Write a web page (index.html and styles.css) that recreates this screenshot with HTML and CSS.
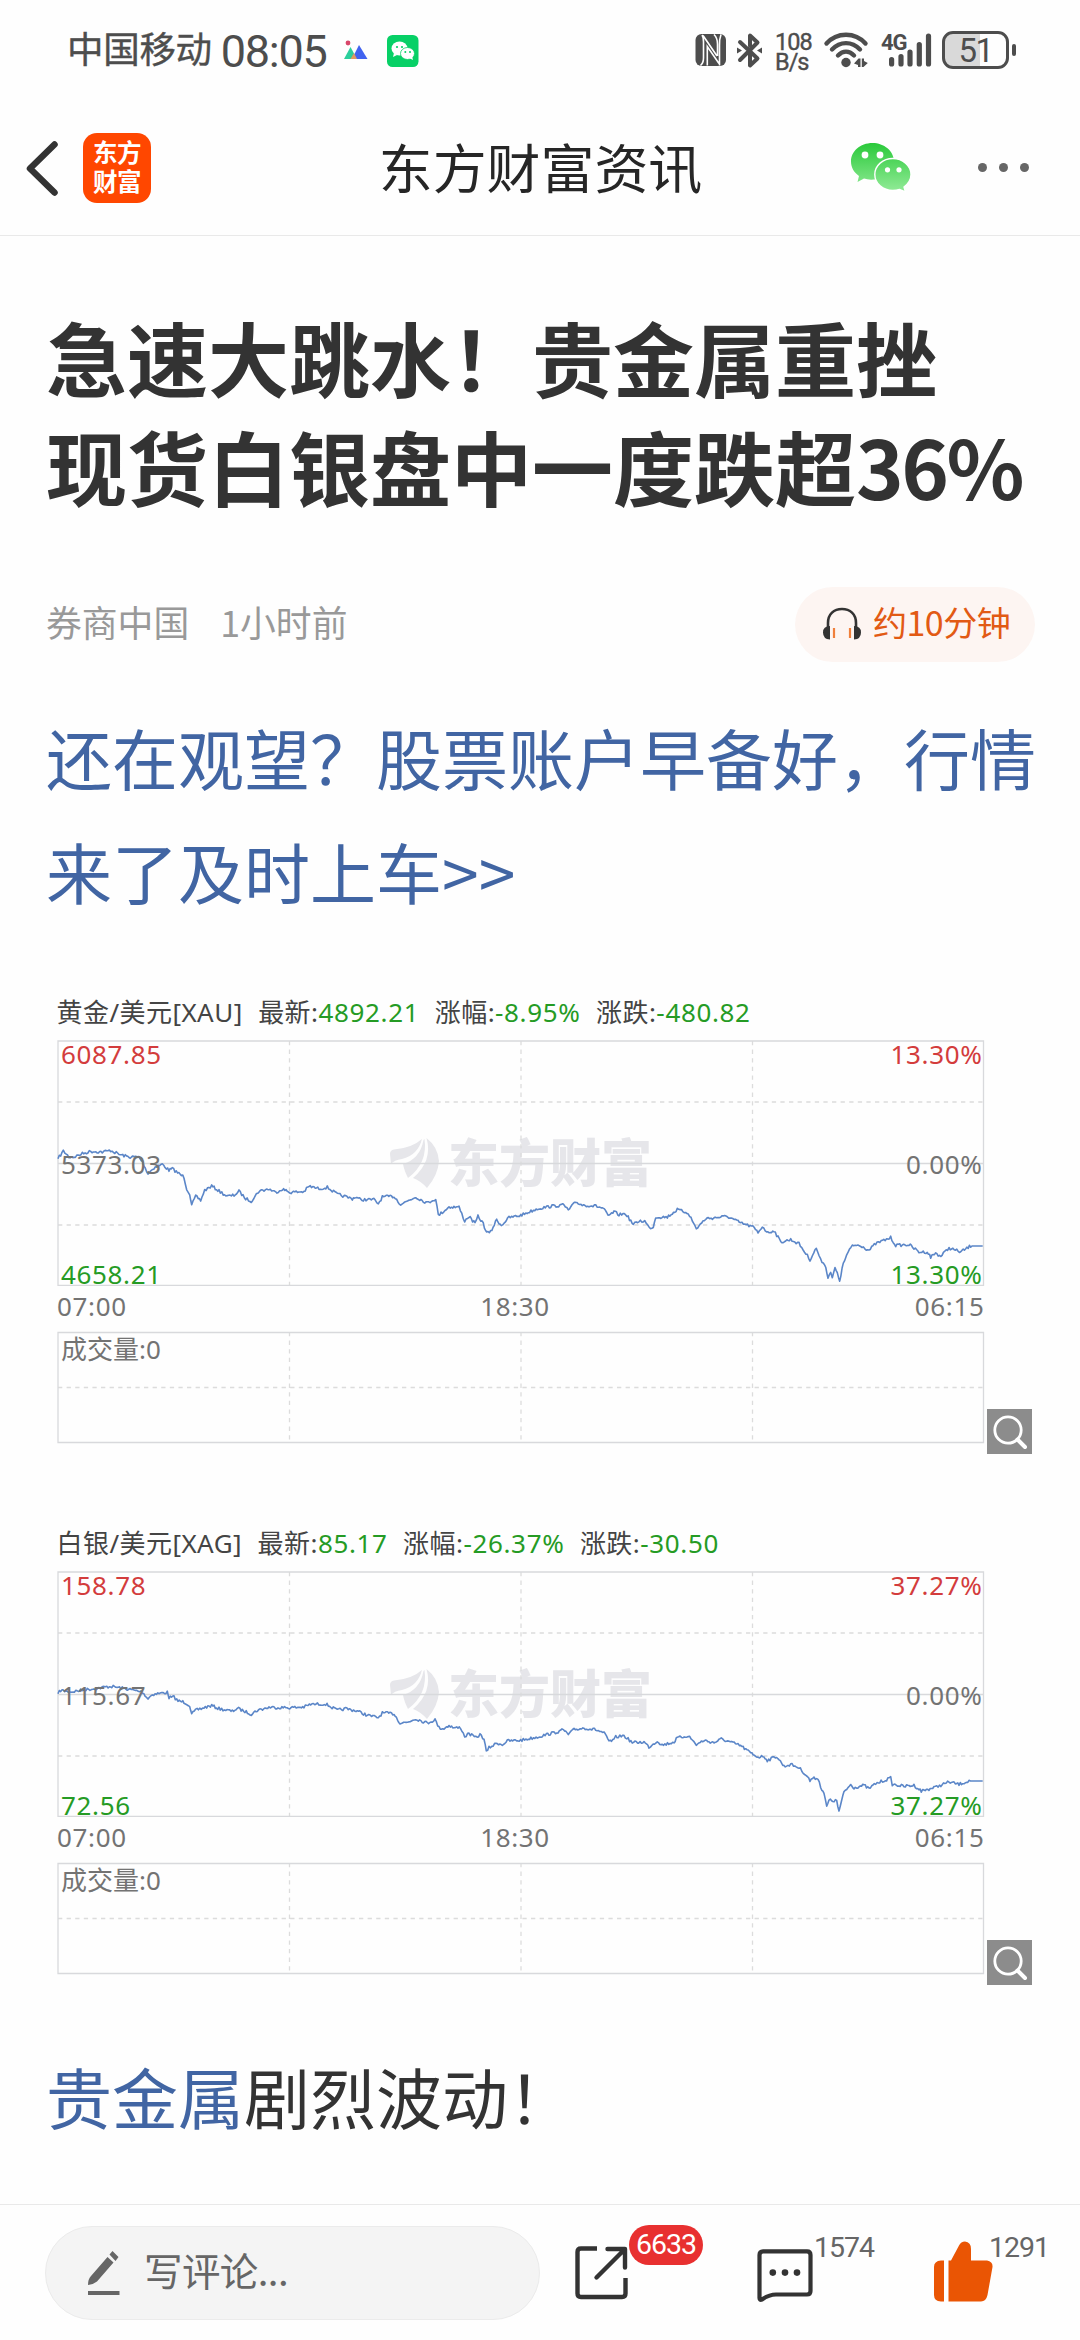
FILE: index.html
```html
<!DOCTYPE html>
<html lang="zh-CN">
<head>
<meta charset="utf-8">
<title>东方财富资讯</title>
<link rel="stylesheet" href="styles.css">
</head>
<body>
<div class="status">
  <span class="carrier">中国移动</span>
  <span class="clock">08:05</span>
  <svg class="ic-mountain" width="24" height="20" viewBox="0 0 24 20">
    <circle cx="4" cy="3" r="2.4" fill="#d8476a"/>
    <path d="M0 19L6.500 7L13 19z" fill="#2ccf9c"/>
    <path d="M8 19L15 5L23.500 19z" fill="#4163f0"/>
    <path d="M6.500 19L10 13L13 19z" fill="#e09a62"/>
  </svg>
  <svg class="ic-chat" width="32" height="32" viewBox="0 0 32 32">
    <rect width="31.500" height="32" rx="5.500" fill="#07d066"/>
    <ellipse cx="12.500" cy="13.500" rx="8" ry="7" fill="#fff"/><path d="M7 18l-1 4l4-2z" fill="#fff"/>
    <ellipse cx="20.500" cy="18.500" rx="7" ry="6" fill="#fff" stroke="#07d066" stroke-width=".8"/><path d="M22 23l4 2l-1-4z" fill="#fff"/>
    <g fill="#07d066"><circle cx="10" cy="12" r="1.100"/><circle cx="15" cy="12" r="1.100"/><circle cx="18.300" cy="17" r="1"/><circle cx="23" cy="17" r="1"/></g>
  </svg>
  <div class="status-right">
    <svg class="ic-nfc" width="32" height="32" viewBox="0 0 32 32">
      <rect x=".5" width="30.500" height="32" rx="6" fill="#4d4d4d"/>
      <path d="M7 1Q8.500 3 8.500 8V24Q8.500 29 5.500 31.500M8 1.500L22 22M12.300 31.500V12.500L24 29.500M19 .5Q22.500 4 22.500 10V22M26 .5Q24 6 24.500 12V31.500" stroke="#fff" stroke-width="1.600" fill="none"/>
    </svg>
    <svg class="ic-bt" width="26" height="35" viewBox="0 0 26 35" fill="none" stroke="#4d4d4d" stroke-width="4" stroke-linejoin="round" stroke-linecap="round">
      <path d="M3 9L20.500 25.500L13 32.500V22M3 27L20.500 9.500L13 2.500V13"/>
      <path d="M0 14.500L5 17.500L0 20.500zM25 14.500L20 17.500L25 20.500z" fill="#4d4d4d" stroke="none"/>
    </svg>
    <div class="speed"><span>108</span><span>B/s</span></div>
    <svg class="ic-wifi" width="45" height="36" viewBox="0 0 45 36">
      <g fill="none" stroke="#4d4d4d" stroke-width="4.400" stroke-linecap="round">
        <path d="M2.500 11.500C13-.2 31-.2 41.500 11.500M8 17.500C16 9 28 9 36 17.500M14 23.500C19 18.500 25 18.500 30 23.500"/>
      </g>
      <circle cx="22" cy="30.500" r="4.700" fill="#4d4d4d"/>
      <path d="M30 31.500L34.500 26.500H36.500V35H34V33zM43.800 31L39.500 35H37.800V26.500H40V29z" fill="#4d4d4d"/>
    </svg>
    <div class="signal">
      <span class="net">4G</span>
      <svg width="52" height="36" viewBox="0 0 52 36" stroke="#4d4d4d" stroke-width="5.200" stroke-linecap="round">
        <path d="M10.600 27.500V32M20 24.500V32M29 20V32M38.300 12.500V32M47.500 4V32"/>
      </svg>
    </div>
    <div class="battery"><span class="battery-level">51</span></div>
    <i class="battery-nub"></i>
  </div>
</div>

<header class="nav">
  <div class="nav-left">
    <svg width="32" height="56" viewBox="0 0 32 56" fill="none" stroke="#333" stroke-width="6.500" stroke-linecap="round" stroke-linejoin="round"><path d="M28.500 4.500L4 28.500L28.500 52.500"/></svg>
    <div class="app-logo"><span>东方</span><span>财富</span></div>
  </div>
  <h1 class="nav-title">东方财富资讯</h1>
  <div class="nav-right">
    <svg width="62" height="50" viewBox="0 0 62 50">
      <defs><linearGradient id="wx" x1="0" y1="0" x2="0" y2="50" gradientUnits="userSpaceOnUse"><stop offset="0" stop-color="#2ac93a"/><stop offset="1" stop-color="#95ec9a"/></linearGradient></defs>
      <path d="M22.500 0C10 0 1 8.300 1 18.500C1 24.500 4 29.500 9 33L7.500 39L14 35.500Q18 37 24 36.500Q44 34 44 18.500C44 8 34 0 22.500 0z" fill="url(#wx)"/>
      <path d="M42.800 15.500C52.500 15.500 61 22.500 61 31.500C61 37 58 41 54 44L55.500 49L49.500 46.500Q46.500 47.500 42.800 47.500C33 47.500 24.800 40.500 24.800 31.500C24.800 22.500 33 15.500 42.800 15.500z" fill="url(#wx)" stroke="#fff" stroke-width="1.400"/>
      <g fill="#fff"><circle cx="15" cy="12" r="3.400"/><circle cx="30" cy="12" r="3.400"/><circle cx="37.500" cy="26.800" r="2.600"/><circle cx="49" cy="26.800" r="2.600"/></g>
    </svg>
    <div class="more"><i></i><i></i><i></i></div>
  </div>
</header>

<main class="article">
  <h2 class="headline">急速大跳水！贵金属重挫<br>现货白银盘中一度跌超<span class="num">36%</span></h2>
  <div class="meta">
    <span class="source">券商中国</span><span class="time">1小时前</span>
    <div class="listen">
      <svg width="40" height="34" viewBox="0 0 40 34">
        <path d="M6 21V16C6 7 12 2 20 2S34 7 34 16V21" fill="none" stroke="#333" stroke-width="2.600"/>
        <path d="M8 19Q1 19 1 25.500T8 32.500zM32 19Q39 19 39 25.500T32 32.500z" fill="#333"/>
        <path d="M12 21V31M28 21V31" stroke="#f0803c" stroke-width="2.200"/>
      </svg>
      <span class="listen-text">约10分钟</span>
    </div>
  </div>
  <p class="promo">还在观望？股票账户早备好，行情<br>来了及时上车&gt;&gt;</p>

  <figure class="quote">
    <figcaption class="quote-head">
      <span>黄金/美元[XAU]</span><span>最新:<b>4892.21</b></span><span>涨幅:<b>-8.95%</b></span><span>涨跌:<b>-480.82</b></span>
    </figcaption>
    <svg class="plot" width="930" height="404" viewBox="0 0 930 404" data-series="gold">
      <g class="mark" transform="translate(333,97)"><path d="M0 17Q0 13 4 12.500Q22 11 32 2Q28 18 12 22Q4 23 1 27zM33.500 3Q30 22 13 27Q14 33 18 41Q38 26 34.500 2zM36.500 1Q48 10 49 24Q48 38 37 51Q31 44 23 41Q43 24 36.500 1z"/><text x="58" y="45">东方财富</text></g>
      <path class="grid" d="M1 62H926M1 185H926M232.500 1V245M464 1V245M695.500 1V245M1 347.500H926M232.500 292V402M464 292V402M695.500 292V402"/>
      <path class="frame" d="M1 1H926.500V245.300H1zM1 123.500H926.500M1 292.500H926.500V402.500H1z"/>
      <path class="series"/>
      <g class="labels">
        <text class="up" x="4" y="24">6087.85</text><text x="4" y="133.500">5373.03</text><text class="down" x="4" y="243.500">4658.21</text>
        <text class="up end" x="925.500" y="24">13.30%</text><text class="end" x="925.500" y="133.500">0.00%</text><text class="down end" x="925.500" y="243.500">13.30%</text>
        <text x="0" y="276">07:00</text><text class="mid" x="458" y="276">18:30</text><text class="end" x="927.500" y="276">06:15</text>
        <text class="vol" x="4" y="319">成交量:0</text>
      </g>
    </svg>
    <span class="magnify"><svg width="45" height="45" viewBox="0 0 45 45" fill="none" stroke="#fff" stroke-width="2.800" stroke-linecap="round"><circle cx="21" cy="21" r="13.200"/><path d="M30.500 30.500L38 38" stroke-width="4"/></svg></span>
  </figure>

  <figure class="quote">
    <figcaption class="quote-head">
      <span>白银/美元[XAG]</span><span>最新:<b>85.17</b></span><span>涨幅:<b>-26.37%</b></span><span>涨跌:<b>-30.50</b></span>
    </figcaption>
    <svg class="plot" width="930" height="404" viewBox="0 0 930 404" data-series="silver">
      <g class="mark" transform="translate(333,97)"><path d="M0 17Q0 13 4 12.500Q22 11 32 2Q28 18 12 22Q4 23 1 27zM33.500 3Q30 22 13 27Q14 33 18 41Q38 26 34.500 2zM36.500 1Q48 10 49 24Q48 38 37 51Q31 44 23 41Q43 24 36.500 1z"/><text x="58" y="45">东方财富</text></g>
      <path class="grid" d="M1 62H926M1 185H926M232.500 1V245M464 1V245M695.500 1V245M1 347.500H926M232.500 292V402M464 292V402M695.500 292V402"/>
      <path class="frame" d="M1 1H926.500V245.300H1zM1 123.500H926.500M1 292.500H926.500V402.500H1z"/>
      <path class="series"/>
      <g class="labels">
        <text class="up" x="4" y="24">158.78</text><text x="4" y="133.500">115.67</text><text class="down" x="4" y="243.500">72.56</text>
        <text class="up end" x="925.500" y="24">37.27%</text><text class="end" x="925.500" y="133.500">0.00%</text><text class="down end" x="925.500" y="243.500">37.27%</text>
        <text x="0" y="276">07:00</text><text class="mid" x="458" y="276">18:30</text><text class="end" x="927.500" y="276">06:15</text>
        <text class="vol" x="4" y="319">成交量:0</text>
      </g>
    </svg>
    <span class="magnify"><svg width="45" height="45" viewBox="0 0 45 45" fill="none" stroke="#fff" stroke-width="2.800" stroke-linecap="round"><circle cx="21" cy="21" r="13.200"/><path d="M30.500 30.500L38 38" stroke-width="4"/></svg></span>
  </figure>

  <p class="body-text"><a>贵金属</a>剧烈波动！</p>
</main>

<footer class="toolbar">
  <div class="comment-box">
    <svg width="34" height="46" viewBox="0 0 34 46" fill="#666"><path d="M20.500 7L26.500 12.500L10 31.500Q5.500 35 1 35Q1 29 4 26zM22.500 4.500L25.500 1L31.500 7L28.500 11zM1 41H32.500V45H1z"/></svg>
    <span class="placeholder">写评论...</span>
  </div>
  <div class="action share">
    <svg width="54" height="54" viewBox="0 0 54 54" fill="none" stroke="#333" stroke-width="4.400"><path d="M22 2.500H6Q2.500 2.500 2.500 6V47.500Q2.500 51 6 51H47Q50.500 51 50.500 47.500V32"/><path d="M32.500 3H50V21.500M49 4L21.500 31.500" stroke-linecap="round" stroke-linejoin="round"/></svg>
    <span class="badge">6633</span>
  </div>
  <div class="action comments">
    <svg width="56" height="54" viewBox="0 0 56 54"><path d="M6 2.300H50Q53.500 2.300 53.500 6V42Q53.500 45.500 50 45.500H19Q12 45.500 5 50.500Q2.500 51.500 2.500 49V6Q2.500 2.300 6 2.300z" fill="none" stroke="#333" stroke-width="4.200"/><g fill="#333"><circle cx="15.800" cy="23.600" r="3.300"/><circle cx="28" cy="23.600" r="3.300"/><circle cx="40" cy="23.600" r="3.300"/></g></svg>
    <span class="count">1574</span>
  </div>
  <div class="action likes">
    <svg width="60" height="62" viewBox="0 0 60 62" fill="#ea5504"><path d="M10 19.500V60.500H7Q0 60 0 54V26Q0 20 7 19.500zM14.500 60.500V19.500H17L25 4.500Q27 .5 31 .5Q37 1 37 8V19.500H53Q59 20.500 58.500 26L53.500 54Q52 60.500 47 60.500z"/></svg>
    <span class="count">1291</span>
  </div>
</footer>
<script src="script.js"></script>
</body>
</html>
```
FILE: styles.css
```css
* { box-sizing: border-box; }
body {
  margin: 0;
  width: 1080px;
  height: 2340px;
  overflow: hidden;
  display: flex;
  flex-direction: column;
  background: #fefefe;
  color: #333;
  font-family: "Noto Sans CJK SC", "Noto Sans", sans-serif;
}
h1, h2, p, figure { margin: 0; }
svg { display: block; flex: none; overflow: visible; }

.status { height: 100px; display: flex; align-items: center; padding: 0 64px 0 67px; color: #4d4d4d; white-space: nowrap; }
.carrier { font-size: 36.500px; line-height: 50px; letter-spacing: -0.3px; margin-bottom: 4px; -webkit-text-stroke: .4px #4d4d4d; }
.clock { font-family: Roboto, sans-serif; font-size: 45px; line-height: 50px; letter-spacing: -1.300px; margin-left: 9px; margin-top: 3px; }
.ic-mountain { margin-left: 18px; }
.ic-chat { margin-left: 19px; margin-top: 2px; }
.status-right { margin-left: auto; display: flex; align-items: center; }
.ic-bt { margin-left: 10px; }
.speed { display: flex; flex-direction: column; width: 37px; margin-left: 12px; font: 23.500px/20px Roboto, sans-serif; letter-spacing: -1px; margin-top: 4px; }
.speed span { -webkit-text-stroke: .4px #4d4d4d; }
.ic-wifi { margin-left: 12px; }
.signal { display: grid; margin-left: 12px; }
.signal > * { grid-area: 1 / 1; }
.net { font: 700 22px/22px Roboto, sans-serif; letter-spacing: -1px; }
.battery { width: 67px; height: 38px; margin-left: 9px; border: 3px solid #4d4d4d; border-radius: 11px; background: linear-gradient(90deg, #d9d9d9 58%, #fefefe 58%); display: flex; justify-content: center; }
.battery-level { font: 33px/34px Roboto, sans-serif; letter-spacing: -1.500px; }
.battery-nub { width: 4px; height: 12px; border-radius: 2px; background: #4d4d4d; margin-left: 3px; }

.nav { height: 136px; display: grid; grid-template-columns: 1fr auto 1fr; align-items: center; border-bottom: 1px solid #e9e9e9; padding: 0 51px 0 26px; }
.nav-left { display: flex; align-items: center; gap: 25px; }
.app-logo { width: 68px; height: 70px; border-radius: 14px; background: #ff4700; color: #fff; display: flex; flex-direction: column; justify-content: center; align-items: center; font-weight: 700; font-size: 24.500px; line-height: 29.500px; letter-spacing: -0.5px; padding-bottom: 3px; }
.nav-title { font-size: 53.900px; font-weight: 400; color: #262626; line-height: 70px; margin: 0 -13px 3px 13px; }
.nav-right { display: flex; align-items: center; justify-content: flex-end; gap: 66px; }
.more { display: flex; gap: 12px; }
.more i { width: 9px; height: 9px; border-radius: 50%; background: #666; }

.article { flex: 1; padding: 66px 45px 0; display: flex; flex-direction: column; }
.headline { font-size: 81px; line-height: 108.500px; font-weight: 700; white-space: nowrap; padding-left: 1px; }
.headline .num { letter-spacing: -2.600px; }
.meta { display: flex; align-items: center; height: 74px; margin-top: 68px; font-size: 35.800px; color: #999; padding-left: 1px; }
.source, .time { margin-bottom: 6px; }
.time { margin-left: 31px; }
.listen { margin-left: auto; width: 240px; height: 75px; border-radius: 38px; background: #fdf5f2; display: flex; align-items: center; gap: 11px; padding-left: 27px; color: #e25a14; font-size: 34px; letter-spacing: -0.5px; white-space: nowrap; }
.listen-text { margin-bottom: 5px; }
.promo { margin-top: 39px; font-size: 66px; line-height: 113.500px; color: #4165a3; white-space: nowrap; padding-left: 1px; }

.quote { position: relative; height: 531px; padding-left: 11.500px; }
.promo + .quote { margin-top: 66px; }
.quote-head { height: 48px; display: flex; gap: 15.500px; padding-top: 1px; font: 26px/36px "Noto Sans", "Noto Sans CJK SC", sans-serif; letter-spacing: .450px; color: #444; white-space: nowrap; }
.quote-head b { font-weight: 400; color: #259b24; letter-spacing: .650px; }
.plot text { font-family: "Noto Sans", "Noto Sans CJK SC", sans-serif; font-size: 26px; letter-spacing: .650px; }
.plot .vol { letter-spacing: 0; }
.frame { fill: none; stroke: #d8d9dc; stroke-width: 1.300; }
.grid { fill: none; stroke: #dcdcdc; stroke-width: 1.300; stroke-dasharray: 4.300 4.300; }
.series { fill: none; stroke: #5b86c8; stroke-width: 1.600; stroke-linejoin: round; }
.labels { fill: #737373; }
.labels .up { fill: #d33c3c; }
.labels .down { fill: #259b24; }
.labels .end { text-anchor: end; }
.labels .mid { text-anchor: middle; }
.mark { fill: #e6e6ea; }
.plot .mark text { font-family: "Noto Sans CJK SC", sans-serif; font-weight: 900; font-size: 51px; letter-spacing: 0; }
.plot { margin-top: -1px; }
.magnify { position: absolute; left: 942px; top: 416px; width: 45px; height: 45px; background: #8c8c8c; }

.body-text { font-size: 66px; line-height: 113.500px; color: #333; margin-top: -16px; padding-left: 1px; }
.body-text a { color: #4165a3; }

.toolbar { height: 136px; border-top: 1px solid #e9e9e9; display: flex; align-items: flex-start; padding: 21px 0 0 45px; }
.comment-box { width: 495px; height: 94px; border-radius: 47px; background: #f4f4f4; border: 1px solid #ebebeb; display: flex; align-items: center; padding-left: 41px; gap: 23px; font-size: 38.500px; color: #666; }
.placeholder { margin-bottom: 8px; letter-spacing: -.6px; }
.action { position: relative; }
.share { margin: 20px 0 0 35px; }
.comments { margin: 23px 0 0 128px; }
.likes { margin: 15px 0 0 121px; }
.badge { position: absolute; left: 54px; top: -21px; width: 74px; height: 40px; border-radius: 20px; background: #e83030; color: #fff; text-align: center; font: 28.500px/40px Roboto, sans-serif; letter-spacing: -1px; }
.count { position: absolute; left: 57px; top: -21px; font: 28.500px/40px Roboto, sans-serif; letter-spacing: -1px; color: #666; }
.likes .count { left: 55px; top: -13px; }
```
FILE: script.js
```js
// Intraday anchors as x,y pairs in thirds of a pixel, measured from the price frame's origin offset.
const series = {
  gold: "52,535 68,512 85,530 100,530 125,520 150,513 185,515 210,510 235,522 265,530 295,530 305,545 322,580 340,562 365,552 385,570 395,565 415,580 430,590 438,625 447,640 453,675 465,648 480,660 492,630 513,617 535,632 560,648 580,645 595,633 615,655 632,662 655,632 685,626 705,636 725,626 747,636 790,634 805,618 835,625 860,621 890,642 935,655 945,650 960,658 1000,658 1013,670 1025,650 1060,648 1080,672 1125,650 1160,668 1185,655 1193,705 1225,680 1255,680 1272,722 1285,708 1303,730 1312,708 1328,730 1338,758 1350,755 1368,718 1382,735 1405,712 1440,705 1490,685 1530,678 1570,674 1583,690 1605,665 1625,674 1665,677 1690,685 1702,708 1720,695 1735,703 1755,700 1778,733 1795,722 1812,722 1825,742 1838,740 1845,710 1880,710 1910,688 1943,698 1967,745 1995,715 2060,708 2100,728 2137,740 2152,757 2165,738 2182,758 2200,750 2220,785 2250,778 2275,790 2308,838 2327,803 2340,840 2352,850 2362,890 2370,875 2375,895 2383,862 2397,900 2408,850 2418,825 2435,795 2460,795 2485,810 2505,790 2550,772 2565,795 2605,793 2635,815 2660,815 2670,830 2685,818 2700,828 2725,803 2760,815 2790,797 2826,797",
  silver: "52,547 60,537 90,542 120,537 160,532 210,525 260,533 305,542 322,562 335,549 380,543 385,559 400,557 412,569 430,572 447,582 453,609 465,597 490,589 513,583 535,592 575,600 590,591 632,608 650,597 685,588 747,589 790,587 810,579 855,578 890,597 915,592 950,599 980,612 1013,619 1025,605 1060,607 1078,635 1100,633 1125,622 1160,635 1183,625 1195,649 1210,652 1225,642 1240,650 1260,649 1272,675 1285,667 1305,679 1318,670 1330,682 1337,722 1345,709 1370,695 1385,700 1400,689 1440,687 1490,677 1560,659 1568,655 1583,670 1600,655 1630,650 1665,655 1690,665 1705,690 1720,687 1725,677 1750,673 1775,694 1810,692 1825,707 1850,689 1865,701 1900,692 1910,680 1943,673 1967,700 1990,687 2020,694 2042,683 2100,703 2130,725 2152,737 2170,735 2180,747 2208,735 2230,765 2250,759 2275,769 2300,795 2308,809 2312,802 2332,800 2340,827 2350,845 2358,887 2365,867 2388,869 2395,900 2410,842 2430,820 2440,829 2470,822 2485,832 2505,817 2550,800 2555,819 2590,825 2620,822 2642,839 2680,829 2725,812 2755,819 2785,809 2826,809"
};

function trace(points) {
  let seed = 7;
  const rand = () => (seed = (seed * 16807) % 2147483647) / 2147483647 - 0.5;
  const at = (x, y) => ((x - 49) / 3).toFixed(1) + " " + ((y - 179) / 3).toFixed(1);
  let d = "M" + at(...points[0]);
  for (let i = 1; i < points.length; i++) {
    const [x0, y0] = points[i - 1], [x1, y1] = points[i];
    const steps = Math.max(1, Math.round((x1 - x0) / 4));
    for (let s = 1; s <= steps; s++) {
      const jitter = x1 > 2800 ? 0 : rand() * 9;
      d += "L" + at(x0 + (x1 - x0) * s / steps, y0 + (y1 - y0) * s / steps + jitter);
    }
  }
  return d;
}

document.querySelectorAll(".plot").forEach(plot => {
  const points = series[plot.dataset.series].split(" ").map(p => p.split(",").map(Number));
  plot.querySelector(".series").setAttribute("d", trace(points));
});
```
